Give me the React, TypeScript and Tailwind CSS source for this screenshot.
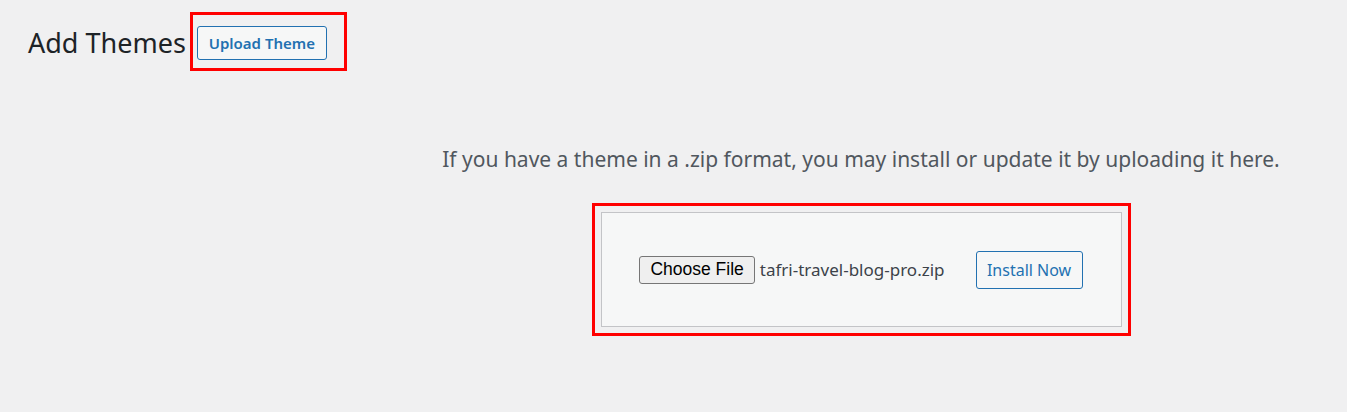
import React from "react";

const App = () => {
  return (
    <div className="min-h-screen w-full bg-[#f0f0f1] font-['Noto_Sans','Open_Sans',sans-serif]">
      <div className="flex items-center pl-[28px] pt-[12px]">
        <h1 className="mt-[2px] text-[27px] font-normal leading-none text-[#1d2327]">
          Add Themes
        </h1>
        <div className="ml-[4px] border-[3px] border-[#ff0000] pl-[4px] pr-[17px] pt-[11px] pb-[8px]">
          <button className="h-[34px] w-[130px] rounded-[3px] border border-[#2271b1] bg-[#f6f7f7] text-[15px] font-semibold text-[#2271b1]">
            Upload Theme
          </button>
        </div>
      </div>

      <div className="ml-[375px] mt-[74px] flex flex-col items-center">
        <p className="text-[21px] leading-[28px] text-[#50575e]">
          If you have a theme in a .zip format, you may install or update it by
          uploading it here.
        </p>
        <div className="mt-[30px] border-[3px] border-[#ff0000] p-[6px]">
          <form className="flex h-[115px] w-[521px] items-center justify-center border border-[#c3c4c7] bg-[#f6f7f7]">
            <label className="flex items-center">
              <span className="flex h-[28px] items-center rounded-[3px] border border-[#767676] bg-[#efefef] px-[10px] font-['Liberation_Sans',Arial,sans-serif] text-[17.5px] text-black">
                Choose File
              </span>
              <span className="ml-[5px] text-[17px] text-[#3c434a]">
                tafri-travel-blog-pro.zip
              </span>
            </label>
            <button
              type="button"
              className="ml-[31px] h-[38px] w-[107px] rounded-[3px] border border-[#2271b1] bg-[#f6f7f7] text-[16px] text-[#2271b1]"
            >
              Install Now
            </button>
          </form>
        </div>
      </div>
    </div>
  );
};

export default App;
